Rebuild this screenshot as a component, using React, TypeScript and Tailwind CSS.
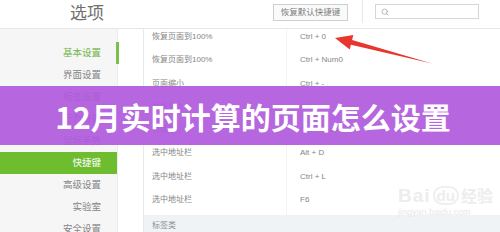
import { Search } from "lucide-react";

const menu = ["基本设置", "界面设置", "标签设置", "行为设置", "鼠标手势", "快捷键", "高级设置", "实验室", "安全设置"];

const rows: [string, string][] = [
  ["恢复页面到100%", "Ctrl + 0"],
  ["恢复页面到100%", "Ctrl + Num0"],
  ["页面缩小", "Ctrl + -"],
  ["页面放大", "Ctrl + ="],
  ["页面缩小", "Ctrl + Num-"],
  ["选中地址栏", "Alt + D"],
  ["选中地址栏", "Ctrl + L"],
  ["选中地址栏", "F6"],
];

function Arrow() {
  return (
    <svg className="absolute left-0 top-0" width="500" height="232" viewBox="0 0 500 232">
      <polygon
        points="335,38 353.3,35 352.1,39.9 432,63.5 350.9,44.7 349.8,49.4"
        fill="#e8352e"
      />
    </svg>
  );
}

function Watermark() {
  return (
    <div className="absolute left-[398px] top-[186px] flex flex-col items-start text-[#ededed]">
      <div className="flex items-end gap-[2px] leading-none">
        <span className="text-[19px] font-bold tracking-[1px]">Bai</span>
        <span className="text-[15px] font-bold border-[2px] border-[#efefef] rounded-full px-[2px]">du</span>
        <span className="text-[16px] font-bold">经验</span>
      </div>
      <span className="text-[9px] mt-[3px] leading-none text-[#e8e8e8]">jingyan.baidu.com</span>
    </div>
  );
}

export default function App() {
  return (
    <div
      className="relative w-[500px] h-[232px] overflow-hidden bg-white"
      style={{ fontFamily: '"Liberation Sans","Noto Sans CJK SC",sans-serif' }}
    >
      <header className="flex h-[29px] items-start border-b border-[#e6e6e6]">
        <div className="w-[273px] pl-[70px] pt-[3px] text-[17px] leading-[22px] text-[#707070]">选项</div>
        <button className="mt-[4px] h-[17px] w-[75px] border border-[#cfcfcf] bg-[#fafafa] text-[8.5px] text-[#7a7a7a]">
          恢复默认快捷键
        </button>
        <div className="ml-[14px] h-[23px] w-px bg-[#e8e8e8]" />
        <div className="ml-[12px] mt-[4px] flex h-[15px] w-[104px] items-center border border-[#d6d6d6] pl-[5px]">
          <Search size={8} className="text-[#9a9a9a]" />
        </div>
      </header>

      <div className="flex h-[203px]">
        <nav className="w-[118px] bg-[#f6f6f6] pt-[13px] border-r border-[#ececec]">
          {menu.map((m, i) => (
            <div
              key={m}
              className={
                i === 5
                  ? "flex h-[22px] items-center justify-end bg-[#6dbd2f] pr-[16px] text-[9.5px] text-white"
                  : i === 0
                  ? "relative flex h-[22px] items-center justify-end pr-[16px] text-[9.5px] text-[#72b546]"
                  : "flex h-[22px] items-center justify-end pr-[16px] text-[9.5px] text-[#858585]"
              }
            >
              {m}
              {i === 0 && <span className="absolute right-[-2px] top-0 h-[22px] w-[3px] bg-[#7cbf4a]" />}
            </div>
          ))}
        </nav>
        <div className="w-[26px] border-r border-[#e9e9e9]" />
        <div className="flex-1">
          {rows.map(([a, b], i) => (
            <div key={i} className="flex h-[23.25px] text-[8px] leading-[16px] text-[#858585]">
              <div className="w-[143px] pl-[8px] border-r border-[#f4f4f4]">{a}</div>
              <div className="pl-[13px]">{b}</div>
            </div>
          ))}
          <div className="h-[23px] bg-[#eff3f6] pl-[8px] pt-[3px] text-[8px] leading-[16px] text-[#8f8f8f]">标签类</div>
        </div>
      </div>

      <Arrow />
      <Watermark />

      <div className="absolute left-0 right-0 top-[86px] flex h-[59px] items-center justify-center bg-[#b05adc]/[0.92] pl-[6px]">
        <span
          className="text-[30px] font-bold leading-none text-white"
          style={{ fontFamily: '"Noto Sans CJK SC","Liberation Sans",sans-serif' }}
        >
          12月实时计算的页面怎么设置
        </span>
      </div>
    </div>
  );
}
